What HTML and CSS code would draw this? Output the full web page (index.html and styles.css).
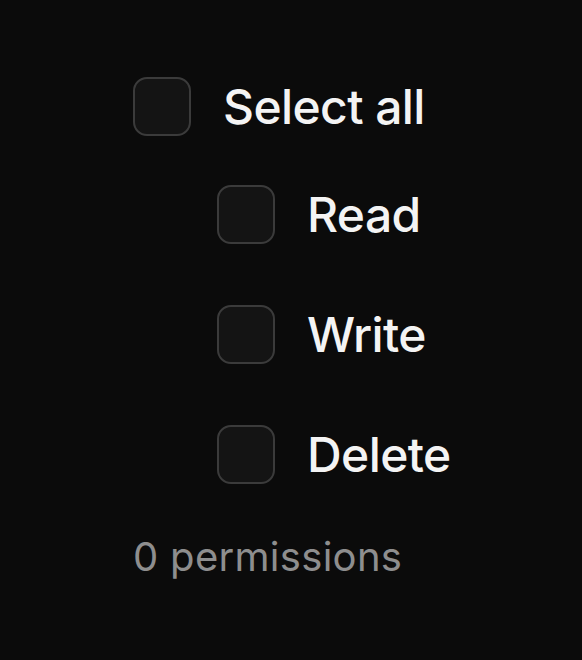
FILE: index.html
```html
<!DOCTYPE html>
<html lang="en">
<head>
<meta charset="utf-8">
<title>Permissions</title>
<link rel="stylesheet" href="styles.css">
</head>
<body>
<main class="panel">
  <label class="row">
    <span class="box"></span>
    <span class="label">Select all</span>
  </label>
  <div class="group">
    <label class="row">
      <span class="box"></span>
      <span class="label">Read</span>
    </label>
    <label class="row">
      <span class="box"></span>
      <span class="label">Write</span>
    </label>
    <label class="row">
      <span class="box"></span>
      <span class="label">Delete</span>
    </label>
  </div>
  <p class="count">0 permissions</p>
</main>
</body>
</html>
```

FILE: styles.css
```css
html, body {
  margin: 0;
  padding: 0;
  background: #0b0b0b;
  height: 100%;
}
body {
  font-family: Inter, "Noto Sans", sans-serif;
  color: #f4f4f4;
}
.panel {
  display: flex;
  flex-direction: column;
  padding: 77px 0 0 133px;
}
.row {
  display: flex;
  align-items: center;
  gap: 32px;
}
.box {
  box-sizing: border-box;
  width: 58px;
  height: 59px;
  border: 2px solid #3b3b3b;
  border-radius: 14px;
  background: #141414;
  flex: none;
}
.label {
  font-size: 48px;
  font-weight: 500;
  letter-spacing: -0.6px;
  line-height: normal;
}
.group {
  display: flex;
  flex-direction: column;
  gap: 61px;
  margin-top: 49px;
  padding-left: 84px;
}
.count {
  margin: 48px 0 0;
  font-size: 40px;
  letter-spacing: 0.3px;
  color: #8e8e8e;
  line-height: normal;
}
```
